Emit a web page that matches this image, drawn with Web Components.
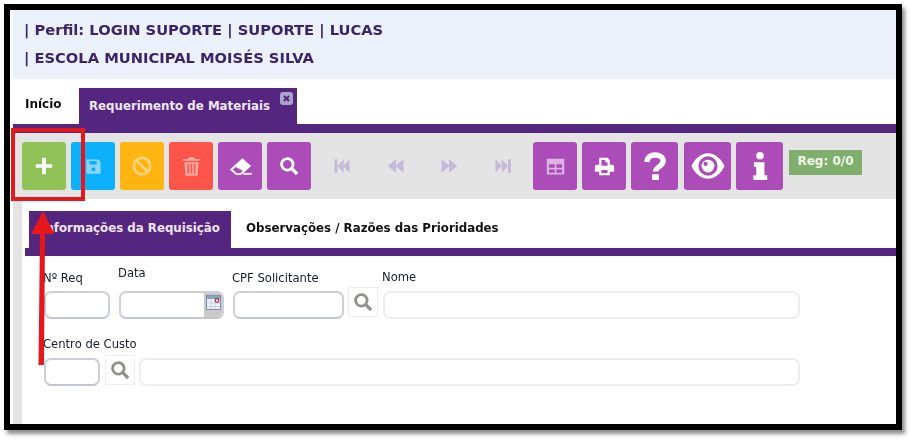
<!DOCTYPE html>
<html lang="pt">
<head>
<meta charset="utf-8">
<title>Requerimento de Materiais</title>
<style>
  html, body { margin: 0; padding: 0; background: #fff; }
  body { width: 915px; height: 443px; overflow: hidden; font-family: "DejaVu Sans", sans-serif; }
</style>
</head>
<body>
<app-frame>
  <info-header>
    <span>| Perfil: LOGIN SUPORTE | SUPORTE | LUCAS</span>
    <span>| ESCOLA MUNICIPAL MOISÉS SILVA</span>
  </info-header>
  <main-tabs></main-tabs>
  <tool-bar></tool-bar>
  <form-panel></form-panel>
  <red-callout></red-callout>
</app-frame>

<script>
// icons, all in a 24x24 box
const ICONS = {
  plus: '<path d="M10 3h4v7h7v4h-7v7h-4v-7H3v-4h7z"/>',
  save: '<path fill-rule="evenodd" d="M3 3h15l3 3v15H3zM7 5v4.500h9V5zM12 13a2.600 2.600 0 1 0 0 5.200 2.600 2.600 0 0 0 0-5.200z"/>',
  ban: '<circle cx="12" cy="12" r="9.800" fill="none" stroke="currentColor" stroke-width="3"/><path d="M5.500 5.500l13 13" stroke="currentColor" stroke-width="3"/>',
  trash: '<path fill-rule="evenodd" d="M9 1.500h6l1 2h6v2H2v-2h6zM4 7h16l-1 15.500H5zM7.500 9v11h1.800V9zM11.100 9v11h1.800V9zM14.700 9v11h1.800V9z"/>',
  eraser: '<path fill-rule="evenodd" d="M14 3.500 23 11.500 13 20.500H7L1 15zM7 12.500 3.800 15 7.800 18.700H12L14.500 16.500z"/><rect x="15" y="18.700" width="9" height="1.800"/>',
  search: '<path fill-rule="evenodd" d="M10 1.500a8.500 8.500 0 1 0 4.600 15.600L20.300 23l2.900-2.900-5.900-5.700A8.500 8.500 0 0 0 10 1.500zM10 4.800a5.200 5.200 0 1 1 0 10.400 5.200 5.200 0 0 1 0-10.400z"/>',
  first: '<path d="M3 4h3.500v16H3zM6.500 12l7.500-8v16zM13.500 12 21 4v16z"/>',
  prev: '<path d="M2 12l10-8v16zM11 12l10-8v16z"/>',
  next: '<path d="M3 4l10 8-10 8zM12 4l10 8-10 8z"/>',
  last: '<path d="M3 4l7.500 8L3 20zM10.500 4l7.500 8-7.500 8zM18 4h3.500v16H18z"/>',
  table: '<path fill-rule="evenodd" d="M2 3h20v18H2zM4.500 9.500v4h6.500v-4zM13 9.500v4h6.500v-4zM4.500 15.500v3.500h6.500v-3.500zM13 15.500v3.500h6.500v-3.500z"/>',
  print: '<path fill-rule="evenodd" d="M6 2h9.500L18 4.500V10h2.500A2.500 2.500 0 0 1 23 12.500V18h-5v4H6v-4H1v-5.500A2.500 2.500 0 0 1 3.500 10H6zM8.500 4.500V11h7V7h-2.500V4.500zM8.500 16v3.500h7V16z"/>',
  question: '<path fill="none" stroke="currentColor" stroke-width="4.600" d="M5 8.500C5.300 4.700 8 2.600 12 2.600c4.200 0 7 2.100 7 5.200 0 4.800-6.600 4.600-6.600 9"/><rect x="9.400" y="19" width="6" height="5" rx=".8"/>',
  eye: '<path fill-rule="evenodd" d="M12 3C6.800 3 2.700 7 .3 12c2.400 5 6.500 9 11.700 9s9.300-4 11.700-9C21.300 7 17.200 3 12 3zM12 5.200a6.800 6.800 0 1 1 0 13.600 6.800 6.800 0 0 1 0-13.600z"/><path fill-rule="evenodd" d="M12 7.500a4.500 4.500 0 1 0 0 9 4.500 4.500 0 0 0 0-9zM10.300 9a1.500 1.500 0 1 1 0 3 1.500 1.500 0 0 1 0-3z"/>',
  info: '<circle cx="12" cy="3.200" r="3.200"/><path d="M6.800 8.800h9v11.200h2.400v4H6.300v-4h2.500v-7.200H6.800z"/>',
};

function icon(name, size) {
  return `<svg width="${size}" height="${size}" viewBox="0 0 24 24" fill="currentColor">${ICONS[name]}</svg>`;
}

class AppFrame extends HTMLElement {
  constructor() {
    super();
    this.attachShadow({ mode: 'open' }).innerHTML = `
      <style>
        :host {
          display: flex;
          flex-direction: column;
          position: relative;
          box-sizing: border-box;
          width: 898px;
          height: 426px;
          margin: 4px 0 0 4px;
          border: 6px solid #000;
          background: #fff;
          padding-left: 3px;
          box-shadow: 3px 4px 4px rgba(0,0,0,.45);
          /* the reference is a slightly soft, scaled up capture */
          filter: blur(.35px);
        }
      </style>
      <slot></slot>`;
  }
}

class InfoHeader extends HTMLElement {
  constructor() {
    super();
    this.attachShadow({ mode: 'open' }).innerHTML = `
      <style>
        :host {
          display: flex;
          flex-direction: column;
          gap: 11px;
          height: 69px;
          box-sizing: border-box;
          padding: 11px 0 0 11px;
          background: #eaf1fb;
          color: #3c2468;
          font: bold 14.7px/17px "DejaVu Sans", sans-serif;
        }
      </style>
      <slot></slot>`;
  }
}

class MainTabs extends HTMLElement {
  constructor() {
    super();
    this.attachShadow({ mode: 'open' }).innerHTML = `
      <style>
        :host {
          display: flex;
          align-items: flex-end;
          height: 45px;
          border-bottom: 9px solid #54267f;
          font: bold 11.8px "DejaVu Sans", sans-serif;
        }
        .home { width: 66px; box-sizing: border-box; padding: 0 0 13px 12px; color: #111; font-size: 12px; }
        .on {
          position: relative;
          display: flex;
          align-items: center;
          box-sizing: border-box;
          width: 218px;
          height: 36px;
          padding-left: 10px;
          background: #54267f;
          color: #eee6f6;
        }
        .close {
          position: absolute;
          top: 4px;
          right: 4px;
          width: 13px;
          height: 13px;
          border-radius: 3px;
          background: #a9a3cb;
          color: #54267f;
        }
        .close svg { display: block; }
      </style>
      <div class="home">Início</div>
      <div class="on">Requerimento de Materiais
        <span class="close"><svg width="13" height="13" viewBox="0 0 13 13"><path d="M4 4l5 5M9 4l-5 5" stroke="currentColor" stroke-width="2"/></svg></span>
      </div>`;
  }
}

class ToolButton extends HTMLElement {
  constructor() {
    super();
    const w = this.getAttribute('w') || 44;
    const size = this.getAttribute('size') || 20;
    const color = this.getAttribute('color') || '#ab4cb8';
    const fg = this.getAttribute('fg') || '#fff';
    this.attachShadow({ mode: 'open' }).innerHTML = `
      <style>
        :host {
          display: flex;
          align-items: center;
          justify-content: center;
          flex: none;
          box-sizing: border-box;
          width: ${w}px;
          height: 48px;
          border-radius: 3px;
          background: ${color};
          color: ${fg};
        }
      </style>
      ${icon(this.getAttribute('icon'), size)}`;
  }
}

class ToolBar extends HTMLElement {
  constructor() {
    super();
    const b = (ic, color, fg, w, size, ml) =>
      `<tool-button icon="${ic}" color="${color}" fg="${fg}" w="${w}" size="${size}" style="margin-left:${ml}px"></tool-button>`;
    const nav = (ic, ml) =>
      `<tool-button icon="${ic}" color="transparent" fg="#c5bbd9" w="24" size="20" style="margin-left:${ml}px"></tool-button>`;
    this.attachShadow({ mode: 'open' }).innerHTML = `
      <style>
        :host {
          display: flex;
          align-items: flex-start;
          height: 66px;
          box-sizing: border-box;
          padding: 9px 0 0 9px;
          background: #e4e4e4;
        }
        .reg {
          margin: 8px 0 0 6px;
          width: 73px;
          height: 25px;
          box-sizing: border-box;
          padding-top: 3px;
          text-align: center;
          background: #7fae6d;
          color: #f0f7e8;
          font: bold 12px/16px "DejaVu Sans", sans-serif;
        }
      </style>
      ${b('plus', '#91c257', '#fff', 44, 22, 0)}
      ${b('save', '#0db0fb', '#8cd6f7', 44, 19, 5)}
      ${b('ban', '#ffb511', '#ffd684', 44, 20, 5)}
      ${b('trash', '#fb5449', '#fdaaa3', 44, 21, 5)}
      ${b('eraser', '#ab4cb8', '#fff', 44, 23, 5)}
      ${b('search', '#ab4cb8', '#fff', 44, 20, 5)}
      ${nav('first', 19)}
      ${nav('prev', 30)}
      ${nav('next', 29)}
      ${nav('last', 30)}
      ${b('table', '#ab4cb8', '#dcb3e2', 44, 21, 18)}
      ${b('print', '#ab4cb8', '#fff', 44, 21, 5)}
      ${b('question', '#ab4cb8', '#fff', 47, 28, 5)}
      ${b('eye', '#ab4cb8', '#fff', 47, 34, 6)}
      ${b('info', '#ab4cb8', '#fff', 47, 28, 5)}
      <div class="reg">Reg: 0/0</div>`;
  }
}

class FormField extends HTMLElement {
  constructor() {
    super();
    const w = this.getAttribute('w');
    const labelTop = this.getAttribute('label-top') || 0;
    const label = this.getAttribute('label') || '';
    const calendar = this.hasAttribute('calendar') ? `
      <span class="cal"><svg width="15" height="15" viewBox="0 0 15 15"><rect x=".5" y=".5" width="14" height="14" fill="#eef3fa" stroke="#7d93ab"/><rect x="1" y="1" width="13" height="3" fill="#8aa3c0"/><path d="M1 8h13M1 11.500h13M5 4v10M9 4v10" stroke="#c3d0de"/><circle cx="11" cy="5.500" r="1.800" fill="#fff" stroke="#b02a30" stroke-width="1.200"/></svg></span>` : '';
    this.attachShadow({ mode: 'open' }).innerHTML = `
      <style>
        :host { display: flex; flex-direction: column; flex: none; width: ${w}px; }
        label {
          display: block;
          height: 14px;
          margin: ${labelTop}px 0 0 -1px;
          font: 11.6px/14px "DejaVu Sans", sans-serif;
          color: #161d28;
          white-space: nowrap;
        }
        .box {
          position: relative;
          box-sizing: border-box;
          height: 28px;
          margin-top: auto;
          border: 2px solid #cdd0da;
          border-bottom-color: #c2c6d2;
          border-radius: 7px;
          background: #fff;
          overflow: hidden;
        }
        :host([pale]) .box { border-color: #ecedf2; }
        .cal {
          position: absolute;
          right: 0;
          top: 0;
          bottom: 0;
          width: 18px;
          display: flex;
          justify-content: center;
          padding-top: 2px;
          box-sizing: border-box;
          background: #c9c9c9;
        }
      </style>
      <label>${label}</label>
      <div class="box">${calendar}</div>`;
  }
}

class LookupButton extends HTMLElement {
  constructor() {
    super();
    this.attachShadow({ mode: 'open' }).innerHTML = `
      <style>
        :host {
          display: flex;
          align-items: center;
          justify-content: center;
          flex: none;
          align-self: flex-end;
          box-sizing: border-box;
          width: 30px;
          height: 30px;
          border: 1px solid #eeeeee;
          color: #92908c;
        }
      </style>
      ${icon('search', 20)}`;
  }
}

class FormPanel extends HTMLElement {
  constructor() {
    super();
    this.attachShadow({ mode: 'open' }).innerHTML = `
      <style>
        :host {
          display: block;
          flex: 1;
          border-left: 9px solid #e4e4e4;
          font-family: "DejaVu Sans", sans-serif;
        }
        .tabs {
          display: flex;
          align-items: flex-end;
          height: 49px;
          padding-left: 3px;
          border-bottom: 8px solid #54267f;
          margin-left: 3px;
          font: bold 11.8px "DejaVu Sans", sans-serif;
        }
        .tabs .on {
          display: flex;
          align-items: center;
          box-sizing: border-box;
          width: 202px;
          height: 37px;
          margin-left: 1px;
          padding: 0 0 3px 12px;
          background: #54267f;
          color: #eee6f6;
          white-space: nowrap;
          overflow: hidden;
        }
        .tabs .off { padding: 0 0 13px 15px; color: #111; }
        .row { display: flex; align-items: stretch; padding-left: 22px; }
        .r1 { height: 63px; }
        .r2 { height: 49px; padding-top: 18px; }
      </style>
      <div class="tabs">
        <div class="on">Informações da Requisição</div>
        <div class="off">Observações / Razões das Prioridades</div>
      </div>
      <div class="row r1">
        <form-field w="66" label="Nº Req" label-top="15"></form-field>
        <form-field w="105" label="Data" label-top="10" calendar style="margin-left:9px"></form-field>
        <form-field w="111" label="CPF Solicitante" label-top="15" style="margin-left:9px"></form-field>
        <lookup-button style="margin-left:4px;margin-bottom:2px"></lookup-button>
        <form-field w="417" pale label="Nome" label-top="14" style="margin-left:5px"></form-field>
      </div>
      <div class="row r2">
        <form-field w="56" label="Centro de Custo"></form-field>
        <lookup-button style="margin-left:5px;margin-bottom:1px"></lookup-button>
        <form-field w="661" pale style="margin-left:4px"></form-field>
      </div>`;
  }
}

// annotation lying over the page: red box round the add button and the arrow
class RedCallout extends HTMLElement {
  constructor() {
    super();
    this.attachShadow({ mode: 'open' }).innerHTML = `
      <style>
        :host { position: absolute; inset: 0; pointer-events: none; }
        .box {
          position: absolute;
          left: 1px;
          top: 118px;
          width: 74px;
          height: 73px;
          box-sizing: border-box;
          border: 4px solid #e3171c;
        }
        svg { position: absolute; left: 21px; top: 201px; }
      </style>
      <div class="box"></div>
      <svg width="24" height="155" viewBox="0 0 24 155"><path d="M12 0 23.500 23H14L13 154H7.500L9 23H0z" fill="#e3171c"/></svg>`;
  }
}

customElements.define('app-frame', AppFrame);
customElements.define('info-header', InfoHeader);
customElements.define('main-tabs', MainTabs);
customElements.define('tool-button', ToolButton);
customElements.define('tool-bar', ToolBar);
customElements.define('form-field', FormField);
customElements.define('lookup-button', LookupButton);
customElements.define('form-panel', FormPanel);
customElements.define('red-callout', RedCallout);
</script>
</body>
</html>
